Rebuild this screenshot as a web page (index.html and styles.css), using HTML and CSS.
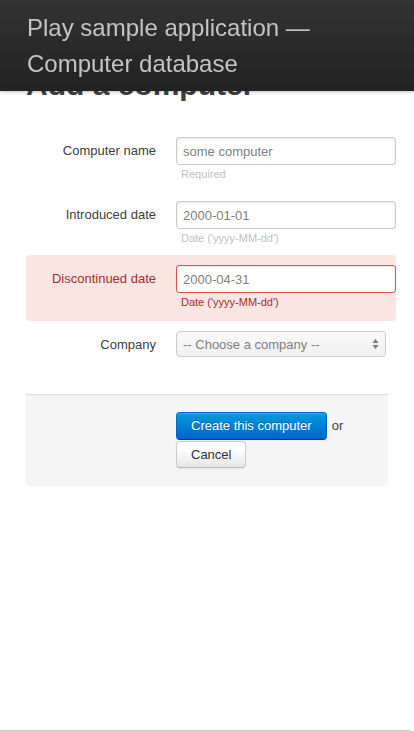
FILE: index.html
```html
<!DOCTYPE html>
<html>
<head>
<meta charset="utf-8">
<title>Computers database</title>
<link rel="stylesheet" href="styles.css">
</head>
<body>
<header class="topbar">
  <h1 class="brand">Play sample application — Computer database</h1>
</header>
<div class="page">
  <section class="main">
    <h1 class="title">Add a computer</h1>
    <form class="form">
      <div class="row">
        <label class="label">Computer name</label>
        <div class="field">
          <input class="input" type="text" value="some computer">
          <span class="help">Required</span>
        </div>
      </div>
      <div class="row">
        <label class="label">Introduced date</label>
        <div class="field">
          <input class="input" type="text" value="2000-01-01">
          <span class="help">Date ('yyyy-MM-dd')</span>
        </div>
      </div>
      <div class="row error">
        <label class="label">Discontinued date</label>
        <div class="field">
          <input class="input" type="text" value="2000-04-31">
          <span class="help">Date ('yyyy-MM-dd')</span>
        </div>
      </div>
      <div class="row">
        <label class="label">Company</label>
        <div class="field">
          <div class="select-wrap">
            <select class="select"><option>-- Choose a company --</option></select>
            <svg class="arrows" width="7" height="12" viewBox="0 0 7 12"><path d="M3.5 1 L6.5 5 L0.5 5 Z M3.5 11 L0.5 7 L6.5 7 Z" fill="#7a7a7a"/></svg>
          </div>
        </div>
      </div>
      <div class="actions">
        <button class="btn primary" type="button">Create this computer</button>
        <span class="or">or</span>
        <a class="btn" href="#">Cancel</a>
      </div>
    </form>
  </section>
  <footer class="footer"></footer>
</div>
</body>
</html>
```

FILE: styles.css
```css
* { box-sizing: border-box; }
html, body { margin: 0; padding: 0; }
body {
  font-family: "Liberation Sans", Arial, Helvetica, sans-serif;
  font-size: 13px;
  line-height: 18px;
  color: #404040;
  background: #fff;
}
.topbar {
  position: fixed;
  top: 0;
  left: 0;
  right: 0;
  height: 91px;
  padding: 10px 27px 9px;
  background: linear-gradient(to bottom, #333333, #222222);
  box-shadow: 0 1px 3px rgba(0,0,0,0.25);
  z-index: 10;
}
.brand {
  margin: 0;
  font-size: 24px;
  line-height: 36px;
  font-weight: normal;
  color: #c4c4c4;
  max-width: 320px;
}
.page {
  min-height: 100vh;
  display: flex;
  flex-direction: column;
}
.main {
  padding: 67px 26px 0;
}
.title {
  margin: 0;
  font-size: 30px;
  line-height: 36px;
  font-weight: bold;
  color: #404040;
}
.form {
  margin-top: 34px;
  width: 370px;
}
.row {
  display: grid;
  grid-template-columns: 130px 220px;
  column-gap: 20px;
  margin-bottom: 18px;
}
.row.error {
  background: #fae5e3;
  border-radius: 4px;
  padding: 10px 0;
  margin: -10px 0 10px;
}
.label {
  text-align: right;
  padding-top: 5px;
  line-height: 18px;
  color: #404040;
}
.row.error .label { color: #a3302c; }
.field { display: flex; flex-direction: column; }
.input {
  display: block;
  width: 220px;
  height: 28px;
  margin: 0;
  padding: 4px 6px;
  font-family: inherit;
  font-size: 13px;
  line-height: 18px;
  color: #808080;
  border: 1px solid #cccccc;
  border-radius: 3px;
  background: #fff;
  box-shadow: inset 0 1px 3px rgba(0,0,0,0.1);
}
.row.error .input { border-color: #d9534f; color: #808080; }
.help {
  display: block;
  font-size: 11px;
  line-height: 18px;
  padding-left: 5px;
  color: #bfbfbf;
}
.row.error .help { color: #a3302c; }
.select-wrap {
  position: relative;
  width: 210px;
}
.select {
  display: block;
  width: 210px;
  height: 26px;
  margin: 0;
  padding: 2px 6px;
  font-family: inherit;
  font-size: 13px;
  color: #808080;
  border: 1px solid #cccccc;
  border-radius: 4px;
  background: linear-gradient(to bottom, #fafafa, #f0f0f0);
  -webkit-appearance: none;
  appearance: none;
}
.arrows {
  position: absolute;
  right: 7px;
  top: 7px;
  pointer-events: none;
}
.actions {
  width: 362px;
  margin-top: 37px;
  padding: 17px 0 18px 150px;
  background: #f5f5f5;
  border-top: 1px solid #dddddd;
  border-radius: 0 0 4px 4px;
  display: flex;
  flex-wrap: wrap;
  align-items: center;
  column-gap: 5px;
  row-gap: 1px;
}
.btn {
  display: inline-block;
  height: 27px;
  padding: 0 14px;
  font-family: inherit;
  font-size: 13px;
  line-height: 25px;
  color: #333;
  text-decoration: none;
  border: 1px solid #cccccc;
  border-bottom-color: #bbbbbb;
  border-radius: 4px;
  background: linear-gradient(to bottom, #ffffff, #ffffff 25%, #e6e6e6);
  box-shadow: inset 0 1px 0 rgba(255,255,255,0.2), 0 1px 2px rgba(0,0,0,0.05);
  cursor: pointer;
}
.btn.primary {
  height: 28px;
  line-height: 26px;
  color: #fff;
  background: linear-gradient(to bottom, #049cdb, #0064cd);
  border-color: #0064cd #0064cd #003f81;
  text-shadow: 0 -1px 0 rgba(0,0,0,0.25);
}
.or { color: #404040; }
.footer {
  margin-top: auto;
  height: 1px;
  margin-right: 3px;
  background: #cccccc;
}
```
